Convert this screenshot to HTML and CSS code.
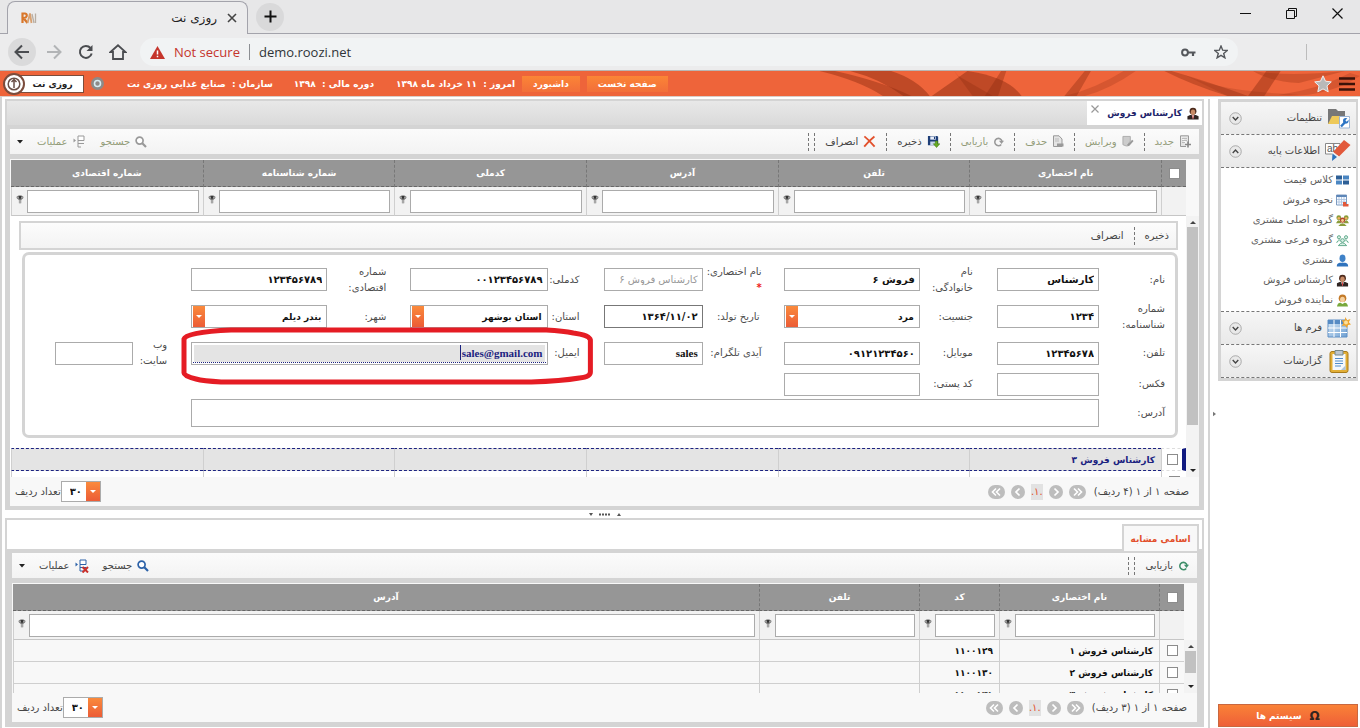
FILE: index.html
```html
<!DOCTYPE html>
<html lang="fa">
<head>
<meta charset="utf-8">
<title>روزی نت</title>
<link rel="stylesheet" href="styles.css">
</head>
<body>
<svg class="defs" width="0" height="0" aria-hidden="true">
  <defs>
    <linearGradient id="gBlue" x1="0" y1="0" x2="1" y2="1"><stop offset="0" stop-color="#dcebf8"/><stop offset="1" stop-color="#6d9fd2"/></linearGradient>
    <symbol id="i-filter" viewBox="0 0 8 9"><path d="M.5 2.300C.5 0 7.500 0 7.500 2.300C7.500 3.700 5.400 4.300 5.200 5.200V8.300H2.900V5.200C2.600 4.300.5 3.700.5 2.300Z" fill="#777"/><circle cx="4" cy="2.300" r="1.500" fill="#333"/><path d="M1.500 2.200L2.800 2.900M6.500 2.200L5.200 2.900M4 5V8" stroke="#eee" stroke-width=".8"/></symbol>
    <symbol id="i-new" viewBox="0 0 12 13"><path d="M1.500.8H9.500V9M7 11.500H1.500V.8" fill="#e4e4e4" stroke="#999"/><path d="M3 3.500H8M3 5.500H8M3 7.500H6" stroke="#bbb"/><path d="M9 6.500V12.500M6 9.500H12" stroke="#888" stroke-width="1.600"/></symbol>
    <symbol id="i-edit" viewBox="0 0 13 13"><path d="M1 1H9V6L5 11.500L1 10Z" fill="#ccc" stroke="#aaa"/><path d="M11 4.500L12.500 6L8 11L5.500 12L6.300 9.500Z" fill="#999"/></symbol>
    <symbol id="i-del" viewBox="0 0 12 13"><path d="M1.500.8H7L10 4V11.500H1.500Z" fill="#e4e4e4" stroke="#999"/><path d="M5 8.500H11.500V11.500H5Z" fill="#999"/><path d="M3 4H7M3 6H7" stroke="#bbb"/></symbol>
    <symbol id="i-ref" viewBox="0 0 12 12"><path d="M9 9.200A4 4 0 1 1 9.800 5.500" fill="none" stroke="currentColor" stroke-width="1.700"/><path d="M6.500 5.200H12L9.300 8.700Z" fill="currentColor"/></symbol>
    <symbol id="i-save" viewBox="0 0 14 14"><path d="M1 1H11L12 2V11H1Z" fill="#1e3f78"/><path d="M3.500 1.500H9.500V5H3.500Z" fill="#e8eefa"/><path d="M3.500 7H10V11H3.500Z" fill="#c8d6ee"/><path d="M7.500 2H8.800V4.300H7.500Z" fill="#1e3f78"/><path d="M9 6.500H11.500V9.500H13.800L10.300 13.500L6.800 9.500H9Z" fill="#6aab22" stroke="#3c7a10" stroke-width=".6"/></symbol>
    <symbol id="i-x" viewBox="0 0 14 13"><path d="M1.500 1Q6.500 5 12.500 12M12.300 1Q6.500 5.500 1.300 12" fill="none" stroke="#e2502c" stroke-width="2"/></symbol>
    <symbol id="i-search" viewBox="0 0 12 12"><circle cx="4.600" cy="4.600" r="3.500" fill="#fff" stroke="currentColor" stroke-width="1.700"/><path d="M7.300 7.300L11 11" stroke="currentColor" stroke-width="2.200"/></symbol>
    <symbol id="i-ops" viewBox="0 0 14 14"><path d="M5 1H11V5.500H5Z" fill="#fff" stroke="currentColor"/><path d="M5 5.500V12H8M5 8.500H11" fill="none" stroke="currentColor"/><path d="M.5 3.500L3 5.500L.5 7.500Z" fill="currentColor"/></symbol>
    <symbol id="i-agent" viewBox="0 0 12 14"><path d="M0 13.500V10L3 8.500H9L12 10V13.500Z" fill="#302522"/><circle cx="6" cy="4.600" r="3.700" fill="#4c2a1c"/><ellipse cx="6" cy="5.600" rx="2.400" ry="3" fill="#c88b66"/><path d="M4.600 8.800L6 13L7.400 8.800Z" fill="#fff"/><path d="M6 9V12.500" stroke="#d33" stroke-width="1"/></symbol>
    <symbol id="i-class" viewBox="0 0 13 12"><path d="M0 1.500H6V5.500H0Z" fill="#2d5f96"/><path d="M7 1.500H13V5.500H7Z" fill="#4a86c2"/><path d="M0 6.500H6V10.500H0Z" fill="#4a86c2"/><path d="M7 6.500H13V10.500H7Z" fill="#2d5f96"/></symbol>
    <symbol id="i-cal" viewBox="0 0 13 13"><path d="M.5 1H10.500V11H.5Z" fill="#f6faff" stroke="#7e9bc0"/><path d="M.5 1H10.500V3H.5Z" fill="#5d86b8"/><path d="M3 3V11M5.500 3V11M8 3V11M1 5.500H10M1 8H10" stroke="#aac0dd" stroke-width=".8"/><path d="M7 8H10V10H12.500V12.500H7Z" fill="#e2593b"/></symbol>
    <symbol id="i-group" viewBox="0 0 14 13"><circle cx="3" cy="3.500" r="2.600"/><circle cx="11" cy="3.500" r="2.600"/><path d="M0 9.500Q3 3 6 9.500ZM8 9.500Q11 3 14 9.500Z"/><circle cx="3" cy="4" r="1.300" fill="#f0b060"/><circle cx="11" cy="4" r="1.300" fill="#f0b060"/><circle cx="7" cy="6" r="2.800" fill="#b5462f"/><circle cx="7" cy="6.500" r="1.500" fill="#f4cc91"/><path d="M2.500 12.500Q7 6.500 11.500 12.500Z"/></symbol>
    <symbol id="i-group2" viewBox="0 0 14 13"><g fill="#d7efe4" stroke="#5aa587"><circle cx="3.200" cy="3" r="1.700"/><circle cx="10.800" cy="3" r="1.700"/><path d="M.7 9Q3 4 5 7M13.300 9Q11 4 9 7M2.500 12Q7 6 11.500 12Z"/><circle cx="7" cy="6.500" r="2"/></g></symbol>
    <symbol id="i-user" viewBox="0 0 12 13"><ellipse cx="6" cy="4.200" rx="3" ry="3.800" fill="#3f82c8"/><path d="M.3 12.500C.3 8 4 9 6 8.500C8 9 11.700 8 11.700 12.500Z" fill="#2f73bd"/></symbol>
    <symbol id="i-rep" viewBox="0 0 12 13"><circle cx="6" cy="4.200" r="3.800" fill="#c37a28"/><ellipse cx="6" cy="5.500" rx="2.400" ry="2.800" fill="#f5cf9d"/><path d="M.5 12.500Q1 8.500 4 8.700L6 10L8 8.700Q11 8.500 11.500 12.500Z" fill="#79a83c"/></symbol>
    <symbol id="i-folder" viewBox="0 0 24 22"><path d="M1 2H9L11 4H18V17H1Z" fill="#777"/><path d="M1 17L5 9H21L17 17Z" fill="#eec95a"/><path d="M12.500 9.500H22.500V21H12.500Z" fill="#fff" stroke="#9bb4d4"/><path d="M14 19.500L18 15.200" stroke="#2c74c4" stroke-width="2.400"/><circle cx="18.800" cy="13.800" r="2.800" fill="#2c74c4"/><path d="M19 14L22 11" stroke="#fff" stroke-width="1.800"/></symbol>
    <symbol id="i-abc" viewBox="0 0 26 22"><path d="M.5 3.500H15V14H.5Z" fill="#fff" stroke="#888"/><text class="ab" x="2" y="12" fill="#555">ab</text><path d="M19 0L25.500 5L14 16.500L8 12Z" fill="#e2593b"/><path d="M8 12L14 16.500L11.500 18L6.500 14Z" fill="#f0efef"/><path d="M7.500 13.500L12 17L7 21Z" fill="#2f73bd"/></symbol>
    <symbol id="i-forms" viewBox="0 0 24 22"><path d="M1 3H20V20H1Z" fill="url(#gBlue)" stroke="#5e8fc5"/><path d="M1 3H20V7H1Z" fill="#568bc4"/><path d="M7 3V20M13.500 3V20M1 11H20M1 15.500H20" stroke="#fff"/><path d="M18.500 0L20 3.200L23.500 2L21.800 5.200L24 7.500L21 8L20 11L18 8.500L14.800 9L16.500 6L14.500 3L17.500 3.500Z" fill="#f0a52b"/><circle cx="19" cy="5.500" r="2" fill="#fde09a"/></symbol>
    <symbol id="i-clip" viewBox="0 0 20 24"><rect x="1" y="2.500" width="18" height="21" rx="2" fill="#e2ae35" stroke="#a87b1a"/><path d="M3.500 5H16.500V21H3.500Z" fill="#f4f8fc"/><path d="M6 1.500H14V6H6Z" fill="#bcc6d0" stroke="#788"/><path d="M6 9.500H14M6 12H14M6 14.500H14M6 17H12" stroke="#4f8ccb"/><path d="M12 21L16.500 16.500V21Z" fill="#adc3d9"/></symbol>
    <symbol id="i-down" viewBox="0 0 14 14"><circle cx="7" cy="7" r="6.200" fill="#e9e9e9" stroke="#a5a5a5"/><path d="M4 5.500L7 8.500L10 5.500" fill="none" stroke="#444" stroke-width="1.500"/></symbol>
    <symbol id="i-up" viewBox="0 0 14 14"><circle cx="7" cy="7" r="6.200" fill="#e9e9e9" stroke="#a5a5a5"/><path d="M4 8.500L7 5.500L10 8.500" fill="none" stroke="#444" stroke-width="1.500"/></symbol>
    <symbol id="i-one" viewBox="0 0 14 14"><circle cx="7" cy="7" r="7" fill="#bdbdbd"/><path d="M5.500 3.500L9 7L5.500 10.500" fill="none" stroke="#fff" stroke-width="1.700"/></symbol>
    <symbol id="i-two" viewBox="0 0 17 14"><rect width="17" height="14" rx="7" fill="#bdbdbd"/><path d="M5 3.500L8.500 7L5 10.500M9 3.500L12.500 7L9 10.500" fill="none" stroke="#fff" stroke-width="1.600"/></symbol>
  </defs>
</svg>

<header class="browser">
  <div class="tabstrip">
    <div class="btab">
      <svg class="favicon" width="16" height="12" viewBox="0 0 16 12"><path d="M1.500 11V1.500H4Q6.500 2 5.500 4.500Q5 6 2.500 6L6.500 11" fill="none" stroke="#d9772b" stroke-width="2.200"/><path d="M6.500 11L9 1.500L10.500 11" fill="none" stroke="#d8a070" stroke-width="1.800"/><path d="M11 2L13 11M14.500 1.500V11" stroke="#b9aea2" stroke-width="1.300"/></svg>
      <span class="btitle" dir="rtl">روزی نت</span>
      <button class="bare" aria-label="Close tab"><svg width="10" height="10" viewBox="0 0 10 10"><path d="M1 1L9 9M9 1L1 9" stroke="#444" stroke-width="1.600"/></svg></button>
    </div>
    <button class="newtab" aria-label="New tab"><svg width="13" height="13" viewBox="0 0 13 13"><path d="M6.500 .5V12.500M.5 6.500H12.500" stroke="#111" stroke-width="2"/></svg></button>
    <div class="winbtns">
      <button class="bare" aria-label="Minimize"><svg width="11" height="11" viewBox="0 0 11 11"><path d="M0 5.500H11" stroke="#111"/></svg></button>
      <button class="bare" aria-label="Restore"><svg width="11" height="11" viewBox="0 0 11 11"><path d="M.5 2.500H8.500V10.500H.5ZM2.500 2.500V.5H10.500V8.500H8.500" fill="none" stroke="#111"/></svg></button>
      <button class="bare" aria-label="Close"><svg width="11" height="11" viewBox="0 0 11 11"><path d="M.5 .5L10.500 10.500M10.500 .5L.5 10.500" stroke="#111" stroke-width="1.200"/></svg></button>
    </div>
  </div>
  <div class="navbar">
    <button class="nav nav-on" aria-label="Back"><svg width="16" height="16" viewBox="0 0 16 16"><path d="M15 8H2M8 1.500L1.500 8L8 14.500" fill="none" stroke="#4a4c50" stroke-width="2"/></svg></button>
    <button class="nav" aria-label="Forward"><svg width="16" height="16" viewBox="0 0 16 16"><path d="M1 8H14M8 1.500L14.500 8L8 14.500" fill="none" stroke="#b2b4b6" stroke-width="2"/></svg></button>
    <button class="nav" aria-label="Reload"><svg width="16" height="16" viewBox="0 0 16 16"><path d="M13.700 9.500A6 6 0 1 1 12.500 4" fill="none" stroke="#4a4c50" stroke-width="2"/><path d="M14.500 1V7H8.500Z" fill="#4a4c50"/></svg></button>
    <button class="nav" aria-label="Home"><svg width="18" height="16" viewBox="0 0 18 16"><path d="M1.500 8L9 1.300L16.500 8H14V15H4V8Z" fill="none" stroke="#4a4c50" stroke-width="1.800"/></svg></button>
    <div class="omnibox">
      <svg width="15" height="13" viewBox="0 0 15 13"><path d="M7.500 0L15 13H0Z" fill="#c5352c"/><path d="M7.500 4.500V8.500M7.500 9.700V11.200" stroke="#fff" stroke-width="1.500"/></svg>
      <span class="notsec">Not secure</span><span class="bar"></span><span class="url">demo.roozi.net</span>
      <svg class="key" width="15" height="9" viewBox="0 0 15 9"><circle cx="4" cy="4.500" r="2.900" fill="none" stroke="#54575b" stroke-width="2"/><path d="M6.500 4.500H14.500M12 4.500V8" stroke="#54575b" stroke-width="2.200"/></svg>
      <svg width="14" height="14" viewBox="0 0 14 14"><path d="M7 1L8.700 5.200L13.200 5.500L9.700 8.400L10.900 12.800L7 10.300L3.100 12.800L4.300 8.400L.8 5.500L5.300 5.200Z" fill="none" stroke="#54575b" stroke-width="1.400"/></svg>
    </div>
    <span class="navsep"></span>
  </div>
</header>

<div class="banner">
  <svg class="swoosh" viewBox="0 0 560 25" preserveAspectRatio="none">
    <g fill="#8f2d12"><path opacity=".45" d="M45 0Q90 10 120 25H92Q70 10 30 0Z"/><path opacity=".5" d="M60 0H100Q125 8 138 25H112Q90 8 60 0Z"/><path opacity=".5" d="M140 25L175 0Q215 6 228 25Z"/><path opacity=".35" d="M162 0L180 25H200L166 5Z"/><path opacity=".4" d="M192 25L208 0H213L205 25ZM270 25L290 0H296L282 25Z"/><path opacity=".25" d="M270 25Q300 18 328 0H340Q315 18 290 25Z"/><path opacity=".4" d="M375 0Q415 12 450 25H430Q395 14 368 0Z"/><path opacity=".22" d="M380 0Q420 22 500 23L480 25H430Z"/><path opacity=".45" d="M450 25L468 0H482L466 25Z"/><path opacity=".3" d="M455 0Q490 6 545 0L500 12Q470 10 455 0Z"/><path opacity=".25" d="M480 24Q520 18 550 2L560 5Q530 25 490 25Z"/></g>
  </svg>
  <button class="brand"><span class="knob"><svg width="22" height="22" viewBox="0 0 22 22"><circle cx="11" cy="11" r="10" fill="#fff" stroke="#7b4c3c" stroke-width="2"/><circle cx="11" cy="11" r="5.800" fill="none" stroke="#6a5048" stroke-width="1.500"/><path d="M11 15V7.500M8.500 9L11 6.500L13.500 9" fill="none" stroke="#6a5048" stroke-width="1.500"/></svg></span><span class="brandname" dir="rtl">روزی نت</span></button>
  <svg class="gear" width="13" height="13" viewBox="0 0 13 13"><circle cx="6.500" cy="6.500" r="6.500" fill="#8d8a88"/><circle cx="6.500" cy="6.500" r="3" fill="#8d8a88" stroke="#d8ecf2" stroke-width="1.600"/></svg>
  <span class="info org" dir="rtl">سازمان :&nbsp; صنایع غذایی روزی نت</span>
  <span class="info year" dir="rtl">دوره مالی :&nbsp; ۱۳۹۸</span>
  <span class="info today" dir="rtl">امروز :&nbsp; ۱۱ خرداد ماه ۱۳۹۸</span>
  <button class="bbtn">داشبورد</button>
  <button class="bbtn">صفحه نخست</button>
  <span class="grow"></span>
  <button class="bare" aria-label="علاقه مندی"><svg width="18" height="18" viewBox="0 0 18 18"><path d="M9 .8L11.500 6.200L17.300 6.900L13 10.900L14.200 16.800L9 13.900L3.800 16.800L5 10.900L.7 6.900L6.500 6.200Z" fill="#b9b9b9" stroke="#eee"/></svg></button>
  <button class="bare" aria-label="منو"><svg width="16" height="14" viewBox="0 0 16 14"><path d="M0 1.500H16M0 7H16M0 12.500H16" stroke="#3a1208" stroke-width="2.400"/></svg></button>
</div>

<div class="app" dir="rtl">
  <aside class="side">
    <nav class="menu">
      <button class="mhead"><svg width="24" height="22"><use href="#i-folder"/></svg><span>تنظیمات</span><svg class="chev" width="13" height="13"><use href="#i-down"/></svg></button>
      <button class="mhead"><svg width="26" height="22"><use href="#i-abc"/></svg><span>اطلاعات پایه</span><svg class="chev" width="13" height="13"><use href="#i-up"/></svg></button>
      <div class="mlist">
        <a href="#"><svg width="13" height="12"><use href="#i-class"/></svg>کلاس قیمت</a>
        <a href="#"><svg width="13" height="13"><use href="#i-cal"/></svg>نحوه فروش</a>
        <a href="#"><svg width="13" height="13" fill="#8a9c3a"><use href="#i-group"/></svg>گروه اصلی مشتری</a>
        <a href="#"><svg width="13" height="13"><use href="#i-group2"/></svg>گروه فرعی مشتری</a>
        <a href="#"><svg width="13" height="13"><use href="#i-user"/></svg>مشتری</a>
        <a href="#"><svg width="13" height="13"><use href="#i-agent"/></svg>کارشناس فروش</a>
        <a href="#"><svg width="13" height="13"><use href="#i-rep"/></svg>نماینده فروش</a>
      </div>
      <button class="mhead"><svg width="24" height="22"><use href="#i-forms"/></svg><span>فرم ها</span><svg class="chev" width="13" height="13"><use href="#i-down"/></svg></button>
      <button class="mhead"><svg width="24" height="24"><use href="#i-clip"/></svg><span>گزارشات</span><svg class="chev" width="13" height="13"><use href="#i-down"/></svg></button>
    </nav>
    <button class="systems"><span class="omega">Ω</span>سیستم ها</button>
  </aside>
  <div class="vsplit"><svg width="3" height="6" viewBox="0 0 4 6"><path d="M0 0L4 3L0 6Z" fill="#777"/></svg></div>

  <main class="work">
    <section class="pane top">
      <div class="tabs">
        <button class="ptab"><svg width="12" height="13"><use href="#i-agent"/></svg><span>کارشناس فروش</span></button>
        <button class="bare ptx" aria-label="بستن"><svg width="8" height="8" viewBox="0 0 8 8"><path d="M.5 .5L7.500 7.500M7.500 .5L.5 7.500" stroke="#999" stroke-width="1.200"/></svg></button>
      </div>
      <div class="frame">
        <div class="tools">
          <button class="tb off"><svg width="12" height="13"><use href="#i-new"/></svg>جدید</button>
          <button class="tb off"><svg width="12" height="13"><use href="#i-edit"/></svg>ویرایش</button>
          <button class="tb off"><svg width="12" height="13"><use href="#i-del"/></svg>حذف</button>
          <button class="tb off gray"><svg width="11" height="11"><use href="#i-ref"/></svg>بازیابی</button>
          <button class="tb"><svg width="13" height="13"><use href="#i-save"/></svg>ذخیره</button>
          <button class="tb"><svg width="13" height="13"><use href="#i-x"/></svg>انصراف</button>
          <span class="tsep"></span>
          <span class="grow"></span>
          <button class="tl off gray"><svg width="12" height="12"><use href="#i-search"/></svg>جستجو</button>
          <button class="tl off gray"><svg width="14" height="14"><use href="#i-ops"/></svg>عملیات</button>
          <button class="bare more" aria-label="بیشتر"><svg width="6" height="4" viewBox="0 0 6 4"><path d="M0 0H6L3 3.500Z" fill="#222"/></svg></button>
        </div>
        <div class="grid">
          <div class="ghead">
            <table>
              <colgroup><col class="cchk"><col><col><col><col><col><col></colgroup>
              <thead>
                <tr><th><input type="checkbox" aria-label="انتخاب همه"></th><th>نام اختصاری</th><th>تلفن</th><th>آدرس</th><th>کدملی</th><th>شماره شناسنامه</th><th>شماره اقتصادی</th></tr>
                <tr class="filters"><td></td>
                  <td><div class="filt"><input aria-label="فیلتر نام اختصاری"><svg width="8" height="9"><use href="#i-filter"/></svg></div></td>
                  <td><div class="filt"><input aria-label="فیلتر تلفن"><svg width="8" height="9"><use href="#i-filter"/></svg></div></td>
                  <td><div class="filt"><input aria-label="فیلتر آدرس"><svg width="8" height="9"><use href="#i-filter"/></svg></div></td>
                  <td><div class="filt"><input aria-label="فیلتر کدملی"><svg width="8" height="9"><use href="#i-filter"/></svg></div></td>
                  <td><div class="filt"><input aria-label="فیلتر شماره شناسنامه"><svg width="8" height="9"><use href="#i-filter"/></svg></div></td>
                  <td><div class="filt"><input aria-label="فیلتر شماره اقتصادی"><svg width="8" height="9"><use href="#i-filter"/></svg></div></td></tr>
              </thead>
            </table>
          </div>
          <div class="gbody">
            <div class="sbar"><i class="up"></i><i class="thumb tall"></i><i class="dn"></i></div>
            <div class="rows">
              <div class="ebar"><button class="eb">ذخیره</button><button class="eb">انصراف</button></div>
              <form class="eform">
                <label for="f1">نام:</label><input id="f1" value="کارشناس">
                <label for="f2">نام خانوادگی:</label><input id="f2" value="فروش ۶">
                <label for="f3" class="oneline">نام اختصاری: <b>*</b></label><input id="f3" value="کارشناس فروش ۶" disabled>
                <label for="f4">کدملی:</label><input id="f4" value="۰۰۱۲۳۴۵۶۷۸۹">
                <label for="f5">شماره اقتصادی:</label><input id="f5" value="۱۲۳۴۵۶۷۸۹">
                <label for="f6" class="c1">شماره شناسنامه:</label><input id="f6" value="۱۲۳۴">
                <label for="f7">جنسیت:</label><span class="sel"><select id="f7"><option>مرد</option></select></span>
                <label for="f8">تاریخ تولد:</label><input id="f8" class="dark" value="۱۳۶۴/۱۱/۰۲">
                <label for="f9">استان:</label><span class="sel"><select id="f9"><option>استان بوشهر</option></select></span>
                <label for="f10">شهر:</label><span class="sel"><select id="f10"><option>بندر دیلم</option></select></span>
                <label for="f11" class="c1">تلفن:</label><input id="f11" value="۱۲۳۴۵۶۷۸">
                <label for="f12">موبایل:</label><input id="f12" value="۰۹۱۲۱۲۳۴۵۶۰">
                <label for="f13" class="oneline">آیدی تلگرام:</label><input id="f13" class="latin" value="sales">
                <label for="f14">ایمیل:</label>
                <span class="mail"><input id="f14" class="latin" value="sales@gmail.com"><i class="caret"></i>
                  <svg class="mark" viewBox="0 0 412 58" preserveAspectRatio="none"><path d="M50 3H365Q382 4 392 6Q408 8 409 13V45Q409 50 398 51Q380 54 350 55H40Q22 54 15 52Q3 49 3 46V12Q5 5 50 3Z" fill="none" stroke="#e51c24" stroke-width="5" vector-effect="non-scaling-stroke"/></svg></span>
                <label for="f15">وب سایت:</label><input id="f15">
                <label for="f16" class="c1">فکس:</label><input id="f16">
                <label for="f17">کد پستی:</label><input id="f17">
                <label for="f18" class="c1">آدرس:</label><textarea id="f18" rows="1"></textarea>
              </form>
              <table class="data">
                <colgroup><col class="cchk"><col><col><col><col><col><col></colgroup>
                <tbody>
                  <tr class="cur"><td><input type="checkbox" aria-label="کارشناس فروش ۳"></td><td>کارشناس فروش ۳</td><td></td><td></td><td></td><td></td><td></td></tr>
                  <tr><td><input type="checkbox" aria-label="کارشناس فروش ۲"></td><td>کارشناس فروش ۲</td><td></td><td></td><td></td><td></td><td></td></tr>
                </tbody>
              </table>
            </div>
          </div>
          <div class="pager">
            <span>صفحه ۱ از ۱ (۴ ردیف)</span>
            <span class="pbtns"><button aria-label="اول"><svg width="17" height="14"><use href="#i-two"/></svg></button><button aria-label="قبل"><svg width="14" height="14"><use href="#i-one"/></svg></button><b>.۱.</b><button class="flip" aria-label="بعد"><svg width="14" height="14"><use href="#i-one"/></svg></button><button class="flip" aria-label="آخر"><svg width="17" height="14"><use href="#i-two"/></svg></button></span>
            <span class="grow"></span>
            <span class="sel small"><select id="p1"><option>۳۰</option></select></span><label for="p1">تعداد ردیف</label>
          </div>
        </div>
      </div>
    </section>

    <div class="hsplit"><svg width="32" height="3" viewBox="0 0 32 3"><path d="M0 0H4L2 3ZM28 3H32L30 0Z" fill="#555"/><path d="M10 1.500H22" stroke="#555" stroke-width="2" stroke-dasharray="2 1"/></svg></div>

    <section class="pane bottom">
      <div class="tabs2"><button class="ptab2">اسامی مشابه</button></div>
      <div class="frame">
        <div class="tools">
          <button class="tb green"><svg width="11" height="11"><use href="#i-ref"/></svg><span>بازیابی</span></button>
          <span class="tsep"></span>
          <span class="grow"></span>
          <button class="tl blue"><svg width="12" height="12"><use href="#i-search"/></svg><span>جستجو</span></button>
          <button class="tl blue"><svg width="14" height="14" viewBox="0 0 14 14"><use href="#i-ops" width="14" height="14"/><path d="M7.500 8L13 13.500M13 8L7.500 13.500" stroke="#c8302c" stroke-width="2"/></svg><span>عملیات</span></button>
          <button class="bare more" aria-label="بیشتر"><svg width="6" height="4" viewBox="0 0 6 4"><path d="M0 0H6L3 3.500Z" fill="#222"/></svg></button>
        </div>
        <div class="grid">
          <div class="ghead">
            <table>
              <colgroup><col class="cchk"><col class="cname"><col class="ccode"><col class="cname"><col></colgroup>
              <thead>
                <tr><th><input type="checkbox" aria-label="انتخاب همه"></th><th>نام اختصاری</th><th>کد</th><th>تلفن</th><th>آدرس</th></tr>
                <tr class="filters"><td></td>
                  <td><div class="filt"><input aria-label="فیلتر نام اختصاری"><svg width="8" height="9"><use href="#i-filter"/></svg></div></td>
                  <td><div class="filt"><input aria-label="فیلتر کد"><svg width="8" height="9"><use href="#i-filter"/></svg></div></td>
                  <td><div class="filt"><input aria-label="فیلتر تلفن"><svg width="8" height="9"><use href="#i-filter"/></svg></div></td>
                  <td><div class="filt"><input aria-label="فیلتر آدرس"><svg width="8" height="9"><use href="#i-filter"/></svg></div></td></tr>
              </thead>
            </table>
          </div>
          <div class="gbody">
            <div class="sbar"><i class="up"></i><i class="thumb"></i><i class="dn"></i></div>
            <div class="rows">
              <table class="data">
                <colgroup><col class="cchk"><col class="cname"><col class="ccode"><col class="cname"><col></colgroup>
                <tbody>
                  <tr><td><input type="checkbox" aria-label="کارشناس فروش ۱"></td><td>کارشناس فروش ۱</td><td>۱۱۰۰۱۲۹</td><td></td><td></td></tr>
                  <tr><td><input type="checkbox" aria-label="کارشناس فروش ۲"></td><td>کارشناس فروش ۲</td><td>۱۱۰۰۱۳۰</td><td></td><td></td></tr>
                  <tr><td><input type="checkbox" aria-label="کارشناس فروش ۳"></td><td>کارشناس فروش ۳</td><td>۱۱۰۰۱۳۱</td><td></td><td></td></tr>
                </tbody>
              </table>
            </div>
          </div>
          <div class="pager">
            <span>صفحه ۱ از ۱ (۳ ردیف)</span>
            <span class="pbtns"><button aria-label="اول"><svg width="17" height="14"><use href="#i-two"/></svg></button><button aria-label="قبل"><svg width="14" height="14"><use href="#i-one"/></svg></button><b>.۱.</b><button class="flip" aria-label="بعد"><svg width="14" height="14"><use href="#i-one"/></svg></button><button class="flip" aria-label="آخر"><svg width="17" height="14"><use href="#i-two"/></svg></button></span>
            <span class="grow"></span>
            <span class="sel small"><select id="p2"><option>۳۰</option></select></span><label for="p2">تعداد ردیف</label>
          </div>
        </div>
      </div>
    </section>
  </main>
</div>
</body>
</html>
```

FILE: styles.css
```css
* { box-sizing: border-box; }
html, body { height: 100%; }
body {
  margin: 0;
  display: flex;
  flex-direction: column;
  overflow: hidden;
  background: #fff;
  color: #444;
  font: 10px/16px "DejaVu Sans", sans-serif;
}
button, input, select, textarea { font: inherit; color: inherit; margin: 0; }
button { border: 0; background: none; padding: 0; white-space: nowrap; }
svg { display: block; flex: none; }
.defs { position: absolute; }
.ab { direction: ltr; font: 10px "Liberation Sans", sans-serif; }
.grow { flex: 1; }
.bare { display: flex; align-items: center; justify-content: center; }

/* browser chrome */
.browser { flex: none; background: #e7e7e8; border-bottom: 1px solid #b9b5b3; }
.tabstrip { display: flex; align-items: center; height: 34px; padding-left: 7px; border-bottom: 1px solid #a3a3ab; }
.btab {
  display: flex; align-items: center; gap: 10px; align-self: flex-end;
  width: 241px; height: 33px; margin-bottom: -1px; padding: 0 10px 0 13px;
  background: #ececed; border: 1px solid #a3a3ab; border-bottom: 0; border-radius: 8px 8px 0 0;
}
.btitle { flex: 1; font-size: 12px; color: #222; }
.newtab { display: flex; align-items: center; justify-content: center; width: 28px; height: 28px; margin-left: 8px; border-radius: 50%; background: #d9d9da; }
.winbtns { display: flex; gap: 35px; margin-left: auto; padding: 0 17px 6px 0; }
.navbar { display: flex; align-items: center; height: 36px; padding-left: 8px; background: #ececed; }
.nav { display: flex; align-items: center; justify-content: center; width: 28px; height: 28px; margin-right: 4px; border-radius: 50%; }
.nav-on { background: #dadadb; }
.omnibox {
  display: flex; align-items: center; flex: 1; height: 28px; padding: 0 10px;
  margin-left: 4px; border-radius: 14px; background: #f1f3f4;
  font: 13px/20px "Open Sans", sans-serif; color: #2f3338;
}
.notsec { color: #c5352c; margin-left: 9px; }
.bar { width: 1px; height: 16px; margin: 0 9px; background: #8c8f93; }
.url { flex: 1; }
.key { margin-right: 18px; }
.navsep { width: 1px; height: 16px; margin: 0 53px 0 68px; background: #bcbcbc; }

/* orange banner */
.banner {
  position: relative; display: flex; align-items: center; flex: none; height: 25px; padding: 0 5px 0 3px;
  background: #ee643a; color: #fff; gap: 7px; font-weight: bold; font-size: 9px;
}
.banner > * { position: relative; }
.banner > .swoosh { position: absolute; right: 0; top: 0; width: 42%; height: 100%; }
.brand { display: flex; align-items: center; color: #222; }
.knob { display: flex; position: relative; z-index: 1; margin-right: -8px; }
.brandname { width: 67px; height: 18px; padding-left: 4px; background: #fff; border: 1px solid #7b4c3c; }
.info { white-space: nowrap; }
.org { margin: 0 14px 0 16px; }
.year { margin-right: 15px; }
.bbtn { height: 16px; padding: 0 11px; background: linear-gradient(#fb8536, #f26e3a); color: #fff; }

/* page body */
.app { display: flex; flex: 1; min-height: 0; padding: 2px 2px 0 0; border-top: 1px solid #d9cdc8; border-left: 2px solid #d4d4d4; }
.side { display: flex; flex-direction: column; flex: none; width: 140px; }
.menu { border: 3px solid #d4d4d4; border-right-width: 2px; }
.mhead {
  display: flex; align-items: center; width: 100%; height: 33px; padding: 0 5px 0 8px; gap: 5px;
  background: linear-gradient(#f6f6f6, #e9e9e9); border-bottom: 1px dashed #777;
}
.chev { margin-right: auto; }
.mlist { padding: 2px 0 1px; border-bottom: 1px dashed #777; }
.mlist a { display: flex; align-items: center; gap: 3px; height: 20px; padding-right: 7px; color: #5e5e5e; text-decoration: none; white-space: nowrap; }
.systems { display: flex; align-items: center; justify-content: center; gap: 8px; height: 23px; margin-top: auto; margin-bottom: 1px; background: linear-gradient(#fa8237, #ee5f38); border: 1px solid #c9673f; color: #fff; font-weight: bold; font-size: 9px; }
.omega { color: #33251f; font-size: 12px; }
.vsplit { display: flex; align-items: center; justify-content: center; flex: none; width: 8px; }
.work { display: flex; flex-direction: column; flex: 1; min-width: 0; padding: 0 4px 1px 3px; border-right: 2px solid #d4d4d4; }
.pane { display: flex; flex-direction: column; min-height: 0; border: 2px solid #d4d4d4; }
.top { flex: 413 1 0; }
.bottom { flex: 208 1 0; }
.hsplit { display: flex; align-items: center; justify-content: center; flex: none; height: 8px; }
.tabs { display: flex; flex: none; height: 24px; background: linear-gradient(#e8e8e8, #dadada); }
.ptab { display: flex; align-items: center; gap: 5px; padding: 0 3px 0 0; background: #fff; color: #22246a; font-weight: bold; font-size: 9px; }
.ptx { align-items: flex-start; width: 20px; padding: 4px 8px 0 4px; background: #fff; }
.tabs2 { display: flex; flex: none; height: 29px; padding: 4px 3px 0; background: #fff; }
.ptab2 { width: 77px; margin-bottom: -2px; background: #f8f8f8; border: 2px solid #d4d4d4; border-bottom: 0; color: #e2502c; font-weight: bold; font-size: 9px; z-index: 1; }
.frame { display: flex; flex-direction: column; flex: 1; min-height: 0; padding: 4px 3px 2px; background: #d4d4d4; }
.bottom .frame { padding: 4px 5px 3px; }
.tools { display: flex; align-items: center; flex: none; height: 25px; padding: 0 2px 0 4px; margin-bottom: 5px; background: linear-gradient(#fbfbfb, #f3f3f3); }
.tb { display: flex; align-items: center; gap: 5px; height: 18px; padding: 0 6px 0 10px; border-left: 1px dashed #777; margin-left: 4px; }
.tl { display: flex; align-items: center; gap: 5px; margin-left: 14px; }
.off { color: #939c79; }
.gray svg { color: #999; }
.green svg { color: #3f8f6a; }
.blue svg { color: #2c62a8; }
.tsep { height: 18px; margin-right: 1px; border-left: 1px dashed #777; }
.more { padding-left: 3px; }

/* data grids */
.grid { display: flex; flex-direction: column; flex: 1; min-height: 0; background: #f8f8f8; }
.ghead { flex: none; padding: 1px 13px 0 1px; }
table { width: 100%; table-layout: fixed; border-collapse: separate; border-spacing: 0; font-weight: bold; font-size: 9px; }
.cchk { width: 25px; }
.cname { width: 160px; }
.ccode { width: 80px; }
th { height: 27px; padding: 0; background: #969696; color: #fff; border-left: 1px dashed #777; border-bottom: 1px dashed #666; }
th:last-child { border-left: 0; }
.filters td { height: 29px; padding: 0 4px; background: #f2f2f2; border-left: 1px solid #cfcfcf; border-bottom: 1px solid #c6c6c6; }
.filt { display: flex; gap: 3px; }
.filt svg { margin-top: 5px; }
.filt input { flex: 1; min-width: 0; height: 23px; }
input, textarea, select { border: 1px solid #ababab; border-radius: 0; background: #fff; padding: 0 4px; outline: 0; }
input[type="checkbox"] { appearance: none; display: block; width: 11px; height: 11px; margin: 0 auto; padding: 0; border: 1px solid #8c8c8c; }
.gbody { display: flex; flex: 1; min-height: 0; overflow: hidden; }
.rows { flex: 1; min-width: 0; overflow: hidden; padding-left: 1px; }
.top .rows { background: #fff; }
.sbar { display: flex; flex-direction: column; align-items: center; flex: none; width: 13px; padding: 5px 0; background: #f3f3f3; }
.sbar i { display: block; }
.up { border: 3px solid transparent; border-top: 0; border-bottom: 3px solid #444; }
.dn { border: 3px solid transparent; border-bottom: 0; border-top: 3px solid #222; margin-top: auto; }
.thumb { width: 11px; height: 50%; margin-top: 3px; background: #c1c1c1; }
.tall { height: 79%; }
.data td { height: 22px; padding: 0 6px; color: #111; border-left: 1px solid #cfcfcf; border-bottom: 1px solid #cfcfcf; white-space: nowrap; overflow: hidden; }
.data td:first-child { padding: 0; }
.data .cur td { height: 23px; background: #e4e4e4; border-top: 1px dashed #1b2280; border-bottom: 1px dashed #1b2280; color: #1b2280; }
.data .cur td:first-child { background: #fff; border-top-color: #ddd; border-bottom-color: #ddd; border-right: 4px solid #101a80; }
.pager { display: flex; align-items: center; flex: none; height: 29px; padding: 0 10px 0 5px; }
.pbtns { display: flex; align-items: center; gap: 6px; margin-right: 8px; }
.pbtns b { width: 12px; text-align: center; background: #e2e2e2; color: #e2502c; font-weight: normal; }
.flip { transform: scaleX(-1); }

/* drop-downs with the orange arrow block */
.sel { position: relative; display: block; }
.sel select { appearance: none; width: 100%; height: 23px; padding: 0 5px; color: #111; font-weight: bold; font-size: 9px; }
.sel::before { content: ""; position: absolute; left: 2px; top: 1px; bottom: 1px; width: 12px; background: linear-gradient(#fa8a3c, #ec5c36); pointer-events: none; }
.sel::after { content: ""; position: absolute; left: 5px; top: 10px; border: 3px solid transparent; border-top-color: #fff; border-bottom: 0; pointer-events: none; }
.small { width: 40px; direction: ltr; }
.small select { height: 21px; padding: 0 4px 0 8px; font-size: 10px; }
.small::before { left: auto; right: 1px; width: 14px; }
.small::after { left: auto; right: 5px; top: 9px; }

/* edit form inside the grid */
.ebar { display: flex; align-items: center; height: 29px; margin: 5px 8px 2px; padding: 0 7px; background: linear-gradient(#fcfcfc, #f3f3f3); border: 2px solid #d4d4d4; }
.eb { height: 18px; padding-left: 10px; }
.eb + .eb { padding-right: 10px; border-right: 1px dashed #777; }
.eform {
  display: grid; align-items: center;
  grid-template-columns: 66px 102fr 77px 136fr 81px 99fr 56px 137fr 83px 136fr 58px 78fr;
  grid-template-rows: 37px 37px 36px 26px 32px;
  margin: 0 8px 10px 11px; padding: 6px 10px 6px 30px;
  border: 3px solid #d4d4d4; border-radius: 7px;
}
.eform label { padding-right: 24px; color: #4c4c4c; }
.eform label:first-child, .eform .c1 { grid-column: 1; padding-right: 0; }
.eform > input, .mail { width: 100%; min-width: 0; height: 23px; }
.eform input { color: #111; font-weight: bold; }
.eform input:disabled { color: #999; font-weight: normal; }
.eform .dark { border-color: #777; }
.eform .latin { font-family: "Liberation Serif", serif; font-size: 11px; }
.eform .oneline { white-space: nowrap; padding-right: 22px; }
.oneline b { display: block; color: #e22; }
.eform textarea { grid-column: 2 / 11; width: 100%; height: 28px; resize: none; }
.mail { position: relative; grid-column: 8 / 11; }
.mail input { display: block; width: 100%; height: 23px; color: #1b2280; background: linear-gradient(#e4e4e4, #e4e4e4) center / calc(100% - 4px) calc(100% - 4px) no-repeat; }
.mail::after { content: ""; position: absolute; left: 2px; right: 2px; bottom: 2px; border-bottom: 1px dotted #1b2280; }
.caret { position: absolute; right: 87px; top: 3px; width: 1px; height: 15px; background: #1b2280; }
.mark { position: absolute; left: -10px; top: -15px; width: calc(100% + 56px); height: 58px; z-index: 2; }
```
